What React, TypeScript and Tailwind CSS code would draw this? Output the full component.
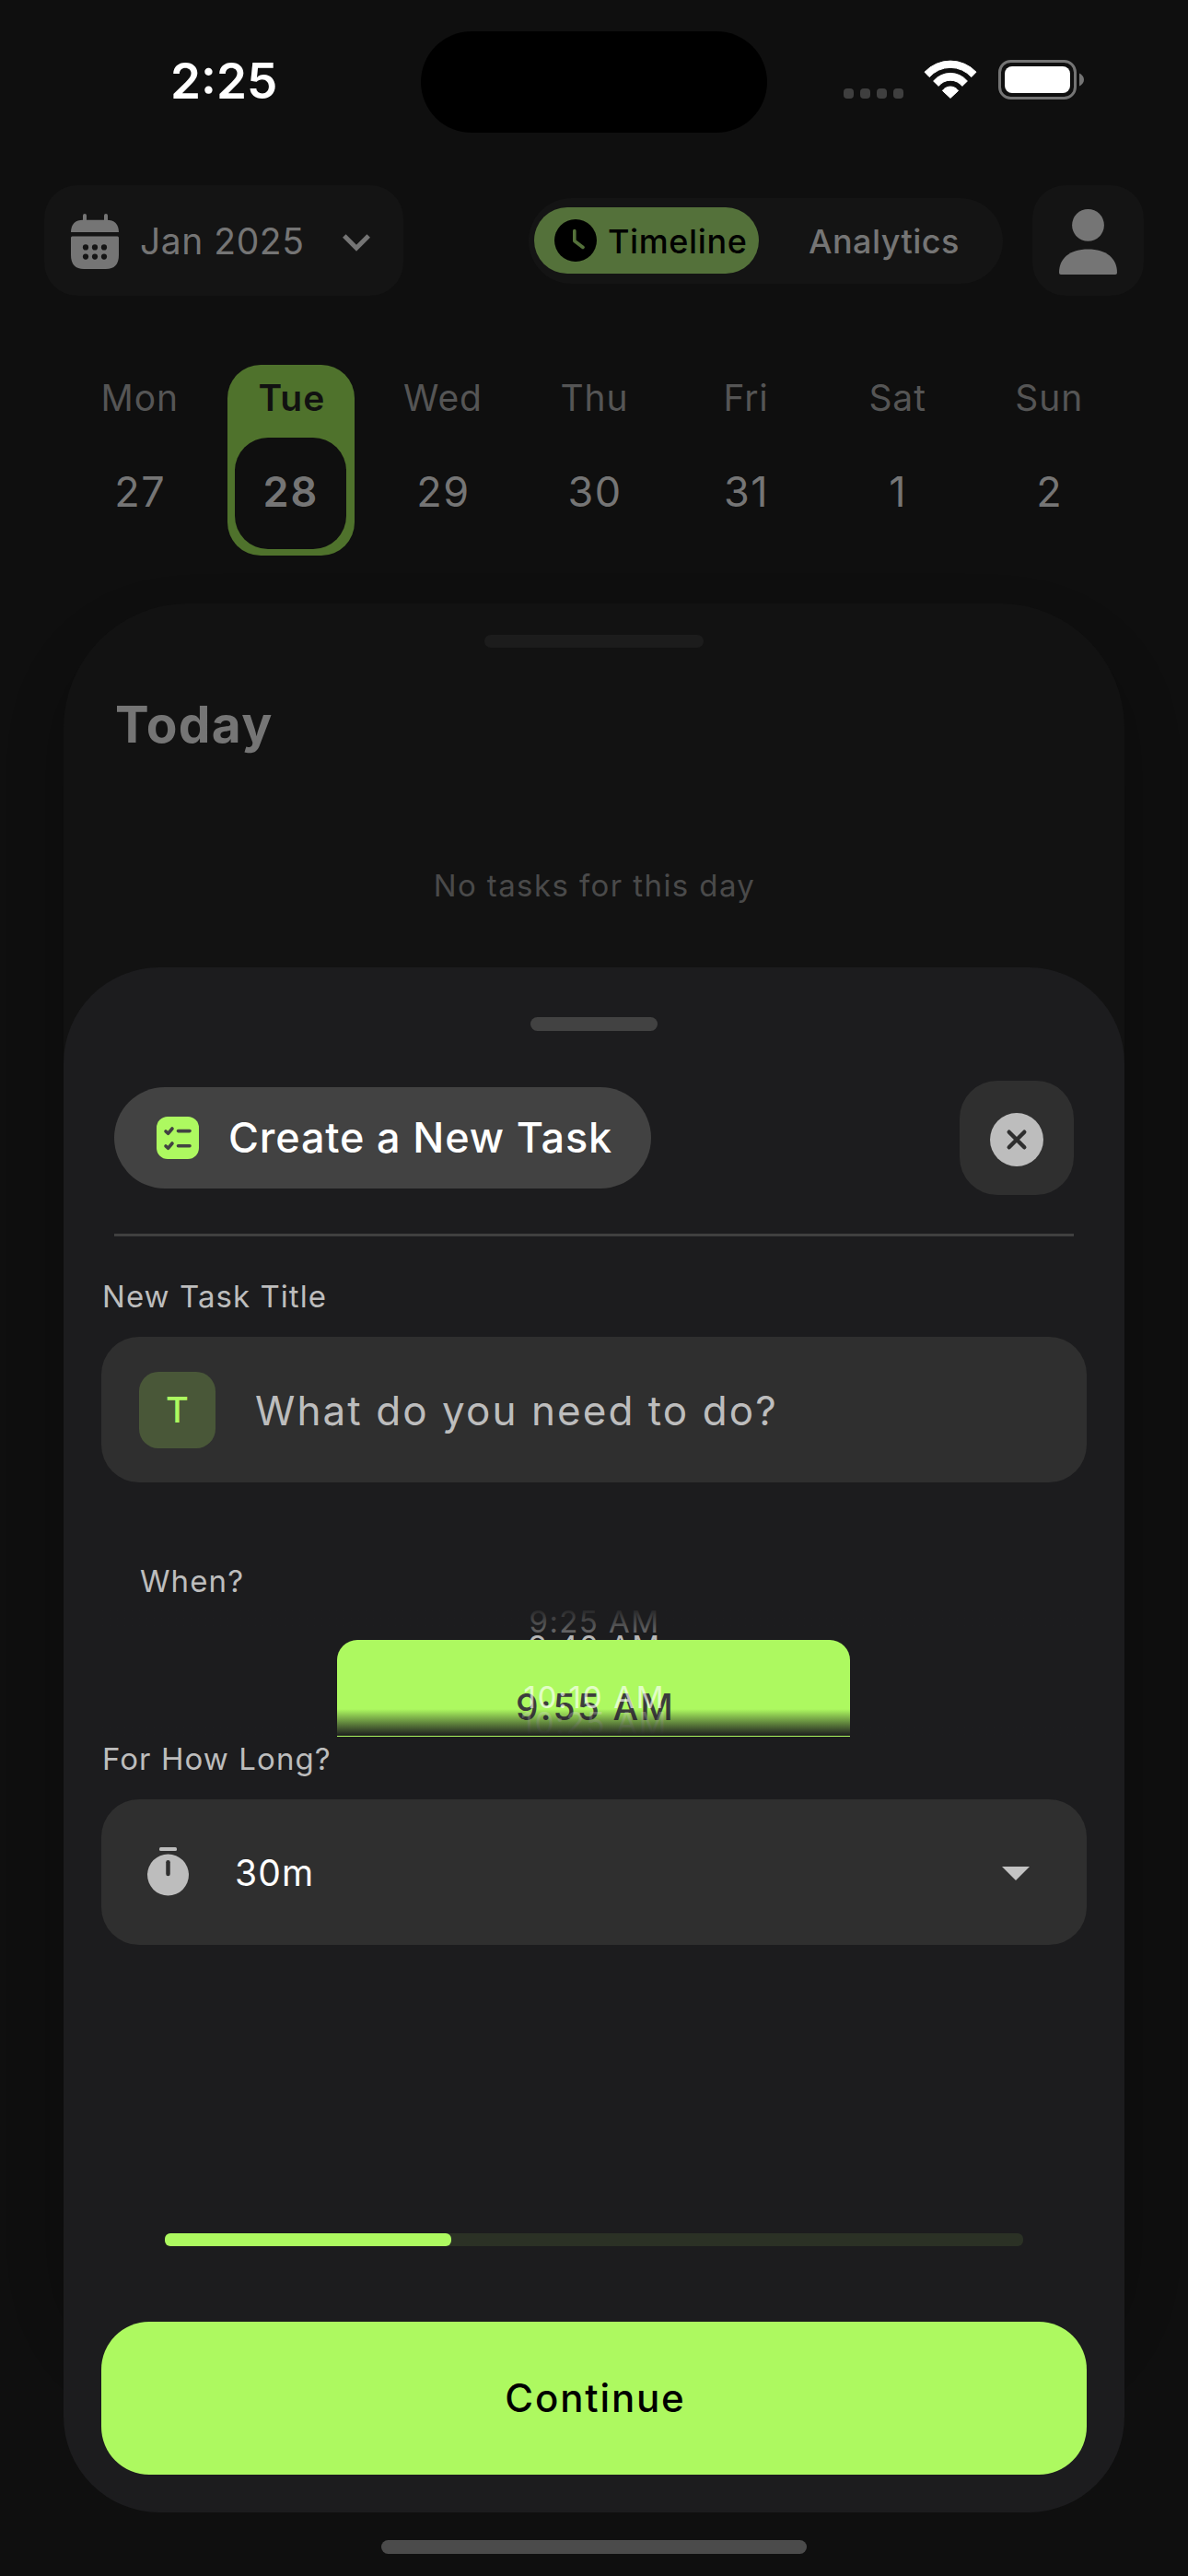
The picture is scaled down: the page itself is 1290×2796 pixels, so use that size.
import React from "react";

type Day = { name: string; date: string; selected?: boolean };

const WEEK: Day[] = [
  { name: "Mon", date: "27" },
  { name: "Tue", date: "28", selected: true },
  { name: "Wed", date: "29" },
  { name: "Thu", date: "30" },
  { name: "Fri", date: "31" },
  { name: "Sat", date: "1" },
  { name: "Sun", date: "2" },
];

function WifiIcon() {
  return (
    <svg width="58" height="42" viewBox="0 0 58 42" fill="#fff" stroke="#fff" strokeWidth="1" strokeLinejoin="round">
      <path d="M1 13.2 A38.5 38.5 0 0 1 57 13.2 L51.8 18.6 A30.5 30.5 0 0 0 6.2 18.6 Z" />
      <path d="M10.6 23 A24 24 0 0 1 47.4 23 L41.8 28.4 A16.3 16.3 0 0 0 16.2 28.4 Z" />
      <path d="M20.4 33.4 A10.6 10.6 0 0 1 37.6 33.4 L29 41.4 Z" />
    </svg>
  );
}

function BatteryIcon() {
  return (
    <svg width="93" height="43" viewBox="0 0 93 43">
      <rect x="1.5" y="1.5" width="82" height="40" rx="12" fill="none" stroke="#747474" strokeWidth="3" />
      <rect x="7" y="7" width="71" height="29" rx="8" fill="#fff" />
      <path d="M88 14.5 C91 16 93 18.5 93 21.5 S91 27 88 28.5 Z" fill="#747474" />
    </svg>
  );
}

function CalendarIcon() {
  return (
    <svg width="52" height="60" viewBox="0 0 52 60" fill="#757575">
      <rect x="13" y="0" width="4" height="12" rx="2" />
      <rect x="36" y="0" width="4" height="12" rx="2" />
      <path d="M0 20 C0 11 5 6.7 13 6.7 H39 C47 6.7 52 11 52 20 Z" />
      <path d="M1.5 24.5 H50.5 Q52 24.5 52 26 V45 C52 55 47 60 38 60 H14 C5 60 0 55 0 45 V26 Q0 24.5 1.5 24.5 Z" />
      <g fill="#141414">
        <circle cx="16" cy="36.4" r="3.1" />
        <circle cx="26" cy="36.4" r="3.1" />
        <circle cx="36" cy="36.4" r="3.1" />
        <circle cx="16" cy="46.6" r="3.1" />
        <circle cx="26" cy="46.6" r="3.1" />
        <circle cx="36" cy="46.6" r="3.1" />
      </g>
    </svg>
  );
}

function StatusBar() {
  return (
    <div className="flex h-[178px] items-center">
      <div className="-mt-[2px] w-[457px] pl-[185px] text-[53px] leading-none font-semibold text-white">2:25</div>
      <div className="h-[110px] w-[376px] rounded-full bg-black" />
      <div className="mt-[25px] ml-[83px] flex gap-[7px]">
        <span className="h-[11px] w-[11px] rounded-[4px] bg-[#3f3f3f]" />
        <span className="h-[11px] w-[11px] rounded-[4px] bg-[#3f3f3f]" />
        <span className="h-[11px] w-[11px] rounded-[4px] bg-[#3f3f3f]" />
        <span className="h-[11px] w-[11px] rounded-[4px] bg-[#3f3f3f]" />
      </div>
      <div className="-mt-[6px] ml-[22px]">
        <WifiIcon />
      </div>
      <div className="-mt-[5px] ml-[23px]">
        <BatteryIcon />
      </div>
    </div>
  );
}

function Toolbar() {
  return (
    <div className="mt-[23px] flex h-[120px] items-center px-[48px]">
      <div className="flex h-[120px] w-[390px] items-center rounded-[36px] bg-[#141414] pr-[36px] pl-[29px]">
        <div className="mt-[2px]">
          <CalendarIcon />
        </div>
        <div className="mt-[2px] ml-[23px] text-[39px] tracking-[0.55px] text-[#757575]">Jan 2025</div>
        <svg className="mt-[4px] ml-auto" width="30" height="19" viewBox="0 0 30 19" fill="none" stroke="#757575" strokeWidth="5">
          <path d="M1.8 2 L15 15.2 L28.2 2" />
        </svg>
      </div>
      <div className="ml-[136px] flex h-[93px] w-[515px] items-center rounded-full bg-[#141414] pl-[6px]">
        <div className="flex h-[72px] w-[244px] items-center rounded-full bg-[#54713a] pl-[22px]">
          <svg width="46" height="46" viewBox="0 0 46 46">
            <circle cx="23" cy="23" r="23" fill="#000" />
            <path d="M21.8 12.5 V23.5 L31 30.5" fill="none" stroke="#54713a" strokeWidth="3.6" strokeLinecap="round" strokeLinejoin="round" />
          </svg>
          <div className="mt-[2px] ml-[12px] text-[36px] font-[450] tracking-[0.6px] text-black">Timeline</div>
        </div>
        <div className="mt-[2px] ml-[54px] text-[36px] font-[450] tracking-[0.45px] text-[#757575]">Analytics</div>
      </div>
      <div className="ml-auto flex h-[120px] w-[121px] items-center justify-center rounded-[36px] bg-[#141414]">
        <svg className="mt-[3px]" width="63" height="71" viewBox="0 0 63 71" fill="#757575">
          <circle cx="31.5" cy="17.4" r="17.4" />
          <path d="M2 71 Q0 71 0 69 C0 53 12 43.5 31.5 43.5 S63 53 63 69 Q63 71 61 71 Z" />
        </svg>
      </div>
    </div>
  );
}

function DayCell({ day }: { day: Day }) {
  if (day.selected) {
    return (
      <div className="flex h-[207px] w-[138px] flex-col items-center rounded-[36px] bg-[#4f722c]">
        <div className="flex h-[72px] items-center pl-[2px] text-[39px] font-semibold tracking-[0.9px] text-[#111]">{day.name}</div>
        <div className="mt-[7px] flex h-[121px] w-[121px] items-center justify-center rounded-[36px] bg-[#0f0f0f] pb-[3px] text-[45px] font-semibold tracking-[2px] text-[#757575]">
          {day.date}
        </div>
      </div>
    );
  }
  return (
    <div className="flex h-[207px] w-[138px] flex-col items-center">
      <div className="flex h-[72px] items-center pl-px text-[39px] tracking-[0.9px] text-[#555]">{day.name}</div>
      <div className="mt-[7px] flex h-[121px] items-center pb-[3px] pl-[2px] text-[45px] tracking-[1.5px] text-[#757575]">{day.date}</div>
    </div>
  );
}

function TodayPanel() {
  return (
    <div className="mx-[69px] mt-[52px] flex h-[1900px] flex-col items-center rounded-[135px] bg-[#121212] pt-[34px] shadow-[0_30px_60px_rgba(0,0,0,0.28)]">
      <div className="h-[14px] w-[238px] rounded-full bg-[#1c1c1c]" />
      <div className="mt-[43px] flex h-[80px] items-center self-start pl-[56px] text-[55px] font-bold tracking-[1.35px] text-[#757575]">
        Today
      </div>
      <div className="mt-[116px] flex h-[40px] items-center pl-px text-[33px] tracking-[1.4px] text-[#4a4a4a]">No tasks for this day</div>
    </div>
  );
}

function TimePicker() {
  return (
    <div className="relative mt-[6px] h-[142px] overflow-hidden text-center text-[33px] leading-[40px] text-white/70">
      <div className="absolute inset-x-0 -top-[3px] pl-px tracking-[1.4px]">9:25 AM</div>
      <div className="absolute inset-x-0 top-[24px] pl-px tracking-[1.4px]">9:40 AM</div>
      <div className="absolute inset-x-0 top-0 h-[37px] bg-linear-to-b from-[#1c1c1e] to-[#1c1c1e]/40 [clip-path:inset(0_0_6px_0)]" />
      <div className="absolute top-[37px] left-[256px] h-[140px] w-[557px] rounded-[22px] bg-[#adf960]" />
      <div className="absolute inset-x-0 top-[90px] pl-[3px] text-[39px] font-medium tracking-[2.1px] text-[#3c3c3c]">9:55 AM</div>
      <div className="absolute inset-x-0 top-[79px] pl-px tracking-[1.75px] text-white/65">10:10 AM</div>
      <div className="absolute inset-x-0 top-[107px] pl-px tracking-[1.75px] text-white/30">10:25 AM</div>
      <div className="absolute inset-x-0 bottom-px h-[29px] bg-linear-to-b from-[#1c1c1e]/0 to-[#1c1c1e]" />
    </div>
  );
}

function TaskSheet() {
  return (
    <div className="absolute top-[1050px] left-[69px] flex h-[1677px] w-[1152px] flex-col rounded-[104px] bg-[#1c1c1e]">
      <div className="mt-[54px] h-[15px] w-[138px] self-center rounded-full bg-[#424242]" />

      <div className="mx-[55px] mt-[54px] flex h-[124px] items-center justify-between">
        <div className="flex h-[110px] w-[583px] items-center rounded-full bg-[#424242] pl-[46px]">
          <svg width="46" height="46" viewBox="0 0 46 46" fill="none" stroke="#424242" strokeWidth="3.6" strokeLinecap="round" strokeLinejoin="round">
            <rect width="46" height="46" rx="12" fill="#adf960" stroke="none" />
            <path d="M10 16 L12.5 18.3 L17 13" />
            <path d="M23.5 15.6 H36" />
            <path d="M10 32 L12.5 34.3 L17 29" />
            <path d="M23.5 31.7 H36" />
          </svg>
          <div className="-mt-px ml-[32px] text-[45px] font-medium tracking-[0.83px] text-white">Create a New Task</div>
        </div>
        <div className="flex h-[124px] w-[124px] items-center justify-center rounded-[41px] bg-[#2f2f2f]">
          <svg className="mt-[3px]" width="58" height="58" viewBox="0 0 58 58">
            <circle cx="29" cy="29" r="29" fill="#bdbdbd" />
            <path d="M20.7 20.7 L37.3 37.3 M37.3 20.7 L20.7 37.3" stroke="#2f2f2f" strokeWidth="4.4" strokeLinecap="round" />
          </svg>
        </div>
      </div>

      <div className="mx-[55px] mt-[42px] h-[3px] bg-[#404040]" />

      <div className="mx-[41px] mt-[46px] flex flex-col">
        <div className="flex h-[40px] items-center pl-[1px] text-[33px] tracking-[1.05px] text-[#bdbdbd]">New Task Title</div>
        <div className="mt-[23px] flex h-[158px] items-center rounded-[41px] bg-[#2f2f2f] pl-[41px]">
          <div className="flex h-[83px] w-[83px] items-center justify-center rounded-[21px] bg-[#495738] text-[38px] font-medium text-[#adf960]">
            T
          </div>
          <div className="mt-[2px] ml-[43px] text-[44px] tracking-[2.06px] text-[#bdbdbd]">What do you need to do?</div>
        </div>

        <div className="mt-[88px] flex h-[40px] items-center pl-[42px] text-[33px] tracking-[1.1px] text-[#bdbdbd]">When?</div>
        <TimePicker />

        <div className="mt-[5px] flex h-[40px] items-center pl-[1px] text-[33px] tracking-[1.08px] text-[#bdbdbd]">For How Long?</div>
        <div className="mt-[23px] flex h-[158px] items-center rounded-[41px] bg-[#2f2f2f] pr-[62px] pl-[50px]">
          <svg className="-mt-[2px]" width="45" height="53" viewBox="0 0 45 53">
            <rect x="13" y="0" width="19" height="4" rx="1.5" fill="#bdbdbd" />
            <circle cx="22.5" cy="30" r="22.5" fill="#bdbdbd" />
            <path d="M22.5 16.3 V29" stroke="#2f2f2f" strokeWidth="4.5" strokeLinecap="round" />
          </svg>
          <div className="mt-[2px] ml-[50px] text-[39px] tracking-[1.1px] text-white">30m</div>
          <svg className="mt-[2px] ml-auto" width="30" height="15" viewBox="0 0 30 15" fill="#c3c3c3">
            <path d="M0 0 H30 L15 15 Z" />
          </svg>
        </div>

        <div className="mx-[69px] mt-[313px] h-[14px] rounded-[6px] bg-[#2b3125]">
          <div className="h-full w-1/3 rounded-[6px] bg-[#adf960]" />
        </div>

        <button className="mt-[82px] h-[166px] rounded-[52px] bg-[#adf960] pb-[2px] pl-[3px] text-[42px] font-medium tracking-[1.85px] text-black">
          Continue
        </button>
      </div>
    </div>
  );
}

export default function App() {
  return (
    <div className="relative h-[2796px] w-[1290px] overflow-hidden bg-[#0f0f0f] font-['Inter',sans-serif] whitespace-nowrap">
      <StatusBar />
      <Toolbar />
      <div className="mx-[69px] mt-[75px] grid grid-cols-7 justify-items-center">
        {WEEK.map((day) => (
          <DayCell key={day.name} day={day} />
        ))}
      </div>
      <TodayPanel />
      <TaskSheet />
      <div className="absolute bottom-[24px] left-[414px] h-[15px] w-[462px] rounded-full bg-[#4b4b4b]" />
    </div>
  );
}
